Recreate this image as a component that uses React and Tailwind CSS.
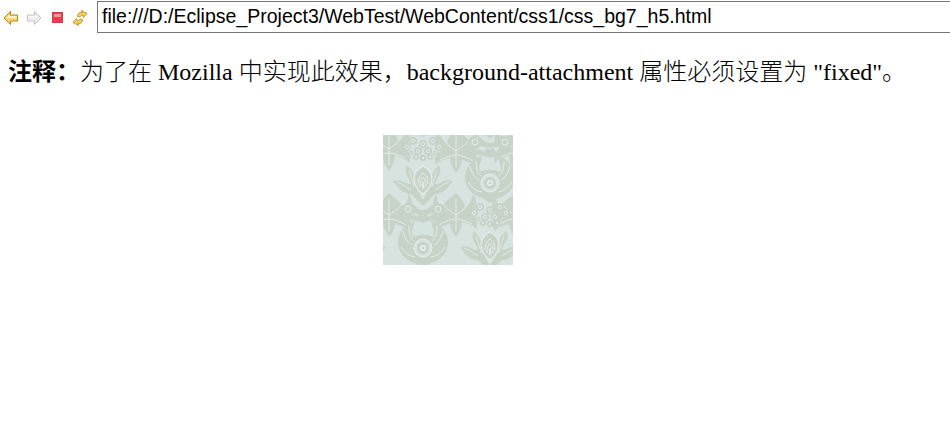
import React from 'react';

const LEAF = '#c7d2c8';
const LINE = '#e6eeea';
const GROUND = '#d7e3df';

const ArrowIcon = ({ flip, fill, stroke }) => (
  <svg width="16" height="16" viewBox="0 0 16 16" className={flip ? '-scale-x-100' : ''}>
    <path d="M1 8 L7.5 1.5 V5 H14.5 V11 H7.5 V14.5 Z" fill={fill} stroke={stroke} strokeWidth="1" strokeLinejoin="round" />
    <path d="M3.5 8 L6.5 4.5 V6 H13.5 V8 Z" fill="#ffffff" opacity="0.65" />
  </svg>
);

const StopIcon = () => (
  <svg width="16" height="16" viewBox="0 0 16 16">
    <rect x="3.5" y="2.5" width="10" height="10" fill="#ee3a4c" stroke="#c9404e" />
    <rect x="5" y="4" width="7" height="3" fill="#f6939c" />
  </svg>
);

const RefreshIcon = () => (
  <svg width="16" height="16" viewBox="0 0 16 16">
    <path d="M5.5 6.5 C5.5 3.5 7.5 2 10 2.5 L9.5 0.5 L15 3.5 L11.5 7.5 L11 5.2 C9.5 4.8 8.5 5.5 8 7 Z" fill="#f6d05f" stroke="#b8860b" strokeWidth="0.8" strokeLinejoin="round" />
    <path d="M10.5 9.5 C10.5 12.5 8.5 14 6 13.5 L6.5 15.5 L1 12.5 L4.5 8.5 L5 10.8 C6.5 11.2 7.5 10.5 8 9 Z" fill="#f6d05f" stroke="#b8860b" strokeWidth="0.8" strokeLinejoin="round" />
  </svg>
);

// bud with spread leaves and a flower cluster above it
const Bud = ({ x, y }) => (
  <g transform={`translate(${x} ${y})`}>
    <path d="M-30 -1 C-22 -4 -18 2 -12 2 C-14 -6 -20 -8 -16 -17 C-11 -12 -9 -8 -8 -2 C-6 6 -3 12 0 18 C3 12 6 6 8 -2 C9 -8 11 -12 16 -17 C20 -8 14 -6 12 2 C18 2 22 -4 30 -1 C25 5 21 12 12 12 C8 16 4 20 0 24 C-4 20 -8 16 -12 12 C-21 12 -25 5 -30 -1 Z" fill={LEAF} />
    <path d="M0 -16 C-8 -12 -10 -5 -8 2 C-6 7 -3 10 0 12 C3 10 6 7 8 2 C10 -5 8 -12 0 -16 Z" fill={LEAF} stroke={LINE} strokeWidth="1.2" />
    <path d="M-5 2 C-5 -4 -3 -7 0 -9 C3 -7 5 -4 5 2 M-3 5 C-3 0 -2 -3 0 -5 C2 -3 3 0 3 5 M-1 7 L0 0 L1 7" fill="none" stroke={LINE} strokeWidth="1" />
    <path d="M-26 0 C-20 2 -16 6 -12 8 M26 0 C20 2 16 6 12 8 M-14 -12 C-12 -6 -10 0 -9 5 M14 -12 C12 -6 10 0 9 5" fill="none" stroke={LINE} strokeWidth="0.8" />
    {[[0, -24, 3.2], [-7, -25, 3], [7, -25, 3], [-12, -29, 2.2], [12, -29, 2.2], [-4, -31, 2.6], [4, -31, 2.6], [0, -36, 2]].map(([cx, cy, r]) => (
      <g key={`${cx}${cy}`}>
        <circle cx={cx} cy={cy} r={r} fill={LEAF} />
        <circle cx={cx} cy={cy} r={r * 0.35} fill={LINE} />
      </g>
    ))}
    <path d="M-22 29 C-24 23 -15 18 -9 23 C-6 26 -4 28 0 28 C4 28 6 26 9 23 C15 18 24 23 22 29 C20 35 12 35 9 31 C5 33 -5 33 -9 31 C-12 35 -20 35 -22 29 Z" fill={LEAF} />
    <circle cx="-15" cy="27" r="3" fill="none" stroke={LINE} strokeWidth="1" />
    <circle cx="15" cy="27" r="3" fill="none" stroke={LINE} strokeWidth="1" />
  </g>
);

// rosette sitting in an open fan of leaves
const Fan = ({ x, y }) => (
  <g transform={`translate(${x} ${y})`}>
    <path d="M-8 -24 C-16 -22 -25 -14 -25 -2 C-25 8 -16 16 -8 18 L0 23 L8 18 C16 16 25 8 25 -2 C25 -14 16 -22 8 -24 C10 -16 12 -12 10 -8 C5 -11 -5 -11 -10 -8 C-12 -12 -10 -16 -8 -24 Z" fill={LEAF} />
    <path d="M-20 -14 C-18 -6 -15 -2 -11 0 M20 -14 C18 -6 15 -2 11 0 M-14 -19 C-14 -10 -12 -6 -9 -4 M14 -19 C14 -10 12 -6 9 -4 M-22 2 C-18 8 -14 11 -8 12 M22 2 C18 8 14 11 8 12" fill="none" stroke={LINE} strokeWidth="0.9" />
    <circle cx="0" cy="3" r="9" fill={GROUND} stroke={LINE} strokeWidth="1" />
    <circle cx="0" cy="3" r="6" fill={LEAF} />
    <circle cx="0" cy="3" r="3" fill={LINE} />
    <circle cx="0" cy="3" r="1.3" fill={LEAF} />
    <path d="M-6 -28 C-3 -33 -1 -33 0 -29 C1 -33 3 -33 6 -28 C10 -32 16 -31 17 -26 C10 -24 5 -25 0 -22 C-5 -25 -10 -24 -17 -26 C-16 -31 -10 -32 -6 -28 Z" fill={LEAF} />
    {[[-10, 27], [0, 30], [10, 27], [-16, 33], [16, 33], [-5, 37], [5, 37]].map(([cx, cy]) => (
      <g key={`${cx}${cy}`}>
        <circle cx={cx} cy={cy} r="4" fill={LEAF} />
        <circle cx={cx} cy={cy} r="1.7" fill="none" stroke={LINE} strokeWidth="0.8" />
      </g>
    ))}
  </g>
);

// curling leaves that fill the seams between the big motifs
const Sprig = ({ x, y, flip }) => (
  <g transform={`translate(${x} ${y}) scale(${flip ? -1 : 1} 1)`}>
    <path d="M0 -22 C6 -16 12 -14 15 -6 C18 -14 20 -16 19 -22 C25 -14 24 -4 17 2 C22 4 24 9 20 16 C16 10 10 12 6 8 C6 14 3 18 0 22 C-4 16 -6 12 -6 6 C-11 10 -16 8 -20 14 C-23 7 -20 2 -15 0 C-22 -6 -22 -15 -17 -21 C-16 -14 -12 -12 -9 -7 C-8 -13 -5 -17 0 -22 Z" fill={LEAF} />
    <path d="M0 -16 V16 M-14 -14 C-11 -8 -6 -4 0 0 M15 -14 C12 -8 6 -4 0 0 M-16 9 C-10 6 -5 4 0 4 M17 10 C10 6 5 4 0 4" fill="none" stroke={LINE} strokeWidth="0.9" />
  </g>
);

const Wallpaper = () => (
  <svg width="130" height="130" viewBox="0 0 130 130" className="block">
    <rect width="130" height="130" fill={GROUND} />
    <Sprig x={73} y={16} />
    <Sprig x={73} y={80} flip />
    <Sprig x={6} y={80} />
    <Sprig x={6} y={14} flip />
    <Sprig x={132} y={80} flip />
    <Sprig x={132} y={14} />
    <Bud x={40} y={47} />
    <Bud x={107} y={113} />
    <Bud x={-27} y={113} />
    <Bud x={174} y={47} />
    <Fan x={107} y={45} />
    <Fan x={40} y={110} />
    <Fan x={-27} y={45} />
    <Fan x={174} y={110} />
    <Fan x={40} y={-21} />
    <Bud x={107} y={-20} />
  </svg>
);

const App = () => {
  return (
    <div className="w-[950px] h-[436px] bg-white overflow-hidden font-['Liberation_Serif','Noto_Sans_CJK_SC',serif]">
      <div className="flex items-center h-[33px] pt-px">
        <div className="flex items-center gap-[7px] w-[97px] pl-[3px] pt-px">
          <ArrowIcon fill="#f6d773" stroke="#b8860b" />
          <ArrowIcon flip fill="#ececec" stroke="#c4c4c4" />
          <StopIcon />
          <RefreshIcon />
        </div>
        <div className="flex-1 h-[32px] flex items-center pl-[4px] border border-r-0 border-[#777777] font-['Liberation_Sans',sans-serif] text-[19.5px] text-black whitespace-nowrap">
          file:///D:/Eclipse_Project3/WebTest/WebContent/css1/css_bg7_h5.html
        </div>
      </div>
      <p className="mt-[21px] ml-2 text-[24px] leading-[36px] text-black whitespace-nowrap font-light">
        <b className="font-bold">注释：</b>为了在 Mozilla 中实现此效果，background-attachment 属性必须设置为 "fixed"。
      </p>
      <div className="mt-[45px] w-[896px] flex justify-center">
        <Wallpaper />
      </div>
    </div>
  );
};

export default App;
